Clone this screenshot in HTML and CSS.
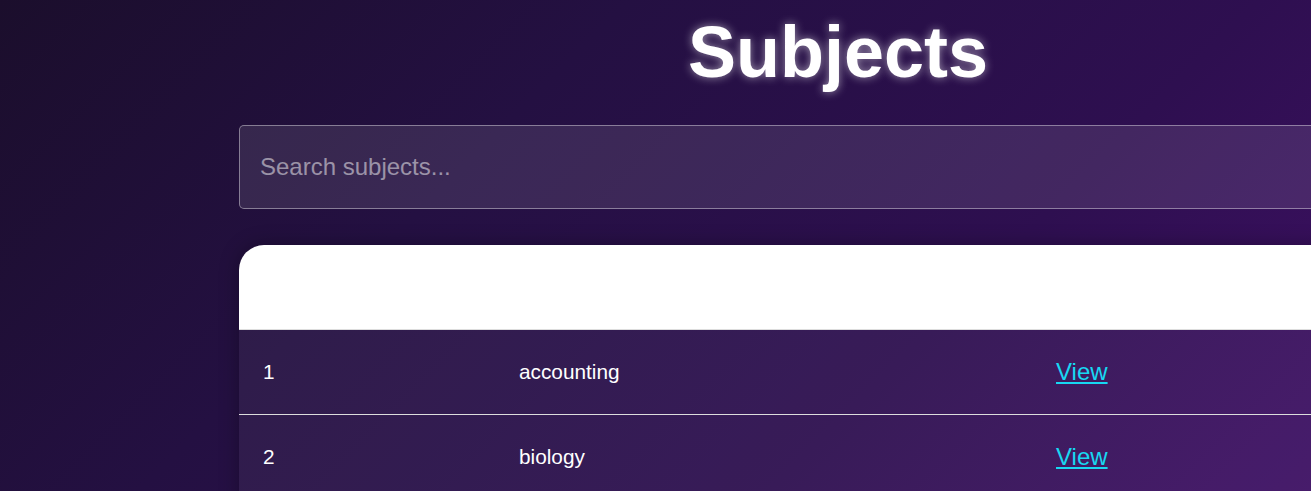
FILE: index.html
```html
<!DOCTYPE html>
<html lang="en">
<head>
<meta charset="utf-8">
<title>Subjects</title>
<link rel="stylesheet" href="styles.css">
</head>
<body>
<div class="container">
  <h1 class="title">Subjects</h1>
  <input class="search" type="text" placeholder="Search subjects...">
  <table class="subjects">
    <thead>
      <tr><th class="c-id"></th><th class="c-name"></th><th class="c-act"></th></tr>
    </thead>
    <tbody>
      <tr><td>1</td><td>accounting</td><td><a href="#" class="view">View</a></td></tr>
      <tr><td>2</td><td>biology</td><td><a href="#" class="view">View</a></td></tr>
      <tr class="more"><td></td><td></td><td></td></tr>
    </tbody>
  </table>
</div>
</body>
</html>
```
FILE: styles.css
```css
html, body {
  margin: 0;
  height: 100%;
}
body {
  overflow: hidden;
  font-family: "Liberation Sans", Arial, sans-serif;
  color: #fff;
  background: linear-gradient(135deg, #1b0e2c 0%, #241042 35%, #2e0f50 70%, #3e1064 100%);
}
.container {
  width: 1198px;
  margin-left: 239px;
  padding-top: 11px;
}
.title {
  margin: 0 0 32px;
  font-size: 72px;
  font-weight: bold;
  line-height: normal;
  text-align: center;
  color: #fff;
  text-shadow: 0 0 10px rgba(255, 255, 255, 0.55);
}
.search {
  display: block;
  box-sizing: border-box;
  width: 100%;
  height: 84px;
  margin: 0 0 36px;
  padding: 0 20px;
  font-family: "Liberation Sans", Arial, sans-serif;
  font-size: 24px;
  color: #fff;
  background: rgba(255, 255, 255, 0.1);
  border: 1px solid rgba(255, 255, 255, 0.4);
  border-radius: 5px;
  outline: none;
}
.search::placeholder {
  color: rgba(255, 255, 255, 0.5);
}
.subjects {
  width: 100%;
  border-collapse: separate;
  border-spacing: 0;
  border-radius: 25px;
  overflow: hidden;
  box-shadow: 0 0 20px rgba(0, 0, 0, 0.3);
}
.subjects th {
  background: #fff;
  height: 84px;
  padding: 0;
  border-bottom: 1px solid #ddd;
}
.c-id { width: 256px; }
.c-name { width: 537px; }
.subjects td {
  height: 84px;
  padding: 0 24px;
  font-size: 20.8px;
  text-align: left;
  vertical-align: middle;
  background: rgba(255, 255, 255, 0.05);
  border-bottom: 1px solid #ddd;
}
.view {
  font-size: 24px;
  color: #17d8f2;
  text-decoration: underline;
}
```
